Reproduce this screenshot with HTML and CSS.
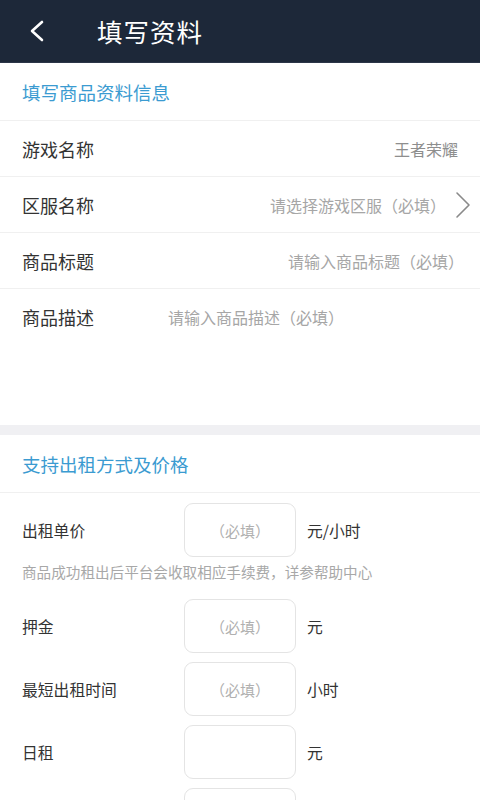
FILE: index.html
```html
<!DOCTYPE html>
<html lang="zh-CN">
<head>
<meta charset="utf-8">
<title>填写资料</title>
<link rel="stylesheet" href="styles.css">
</head>
<body>
<header class="topbar">
  <span class="back">
    <svg width="16" height="22" viewBox="0 0 16 22"><path d="M13 2 L3 11 L13 20" fill="none" stroke="#ffffff" stroke-width="2.6" stroke-linecap="round" stroke-linejoin="round"/></svg>
  </span>
  <h1 class="title">填写资料</h1>
</header>

<section class="card">
  <div class="sec-title">填写商品资料信息</div>
  <div class="row">
    <span class="label">游戏名称</span>
    <span class="value value-dark">王者荣耀</span>
  </div>
  <div class="row">
    <span class="label">区服名称</span>
    <span class="value">请选择游戏区服（必填）</span>
    <svg class="chev" width="18" height="28" viewBox="0 0 18 28"><path d="M3 2 L15 14 L3 26" fill="none" stroke="#8a8a8a" stroke-width="1.6" stroke-linecap="round" stroke-linejoin="round"/></svg>
  </div>
  <div class="row">
    <span class="label">商品标题</span>
    <span class="value value-pad">请输入商品标题（必填）</span>
  </div>
  <div class="row row-desc">
    <span class="label">商品描述</span>
    <span class="desc-ph">请输入商品描述（必填）</span>
  </div>
</section>

<div class="band"></div>

<section class="card">
  <div class="sec-title">支持出租方式及价格</div>
  <div class="prices">
    <div class="price-row">
      <span class="plabel">出租单价</span>
      <span class="box">（必填）</span>
      <span class="unit">元/小时</span>
    </div>
    <p class="note">商品成功租出后平台会收取相应手续费，详参帮助中心</p>
    <div class="price-row">
      <span class="plabel">押金</span>
      <span class="box">（必填）</span>
      <span class="unit">元</span>
    </div>
    <div class="price-row">
      <span class="plabel">最短出租时间</span>
      <span class="box">（必填）</span>
      <span class="unit">小时</span>
    </div>
    <div class="price-row">
      <span class="plabel">日租</span>
      <span class="box"></span>
      <span class="unit">元</span>
    </div>
    <div class="price-row">
      <span class="plabel"></span>
      <span class="box"></span>
    </div>
  </div>
</section>
</body>
</html>
```

FILE: styles.css
```css
* { box-sizing: border-box; }
html, body { margin: 0; padding: 0; background: #ffffff; }
body {
  font-family: "Noto Sans CJK SC", "Noto Sans", sans-serif;
  color: #333333;
}
.topbar {
  height: 63px;
  background: #1d2839;
  display: flex;
  align-items: center;
  border-bottom: 1px solid #2c3648;
}
.back {
  width: 16px;
  height: 22px;
  margin-left: 29px;
  display: flex;
}
.title {
  margin: 0 0 0 52px;
  font-size: 25.5px;
  font-weight: 400;
  color: #ffffff;
  letter-spacing: 1px;
  line-height: 1;
}
.card { background: #ffffff; }
.sec-title {
  height: 58px;
  display: flex;
  align-items: center;
  padding-left: 22px;
  font-size: 18.5px;
  color: #3b9bd1;
  border-bottom: 1px solid #f0f0f0;
}
.row {
  height: 56px;
  display: flex;
  align-items: center;
  padding: 0 22px;
  border-bottom: 1px solid #f0f0f0;
}
.label {
  font-size: 18px;
  color: #333333;
  flex: none;
}
.value {
  margin-left: auto;
  font-size: 16px;
  color: #a6a6a6;
}
.value-dark { color: #8e8e8e; }
.value-pad { margin-right: -6px; }
.chev {
  flex: none;
  margin-left: 8px;
  margin-right: -14px;
}
.row-desc {
  height: 136px;
  align-items: flex-start;
  padding-top: 14px;
  border-bottom: none;
}
.row-desc .label { line-height: 28px; }
.desc-ph {
  margin-left: 74px;
  font-size: 16px;
  color: #a6a6a6;
  line-height: 28px;
}
.band {
  height: 10px;
  background: #f0f0f3;
}
.sec-title.sec2 { }
.card .sec-title + .prices { padding-top: 10px; }
.prices { padding-bottom: 20px; }
.price-row {
  display: flex;
  align-items: center;
  height: 54px;
  padding-left: 22px;
  margin-bottom: 9px;
}
.plabel {
  width: 162px;
  flex: none;
  font-size: 15.8px;
  color: #333333;
}
.box {
  width: 112px;
  height: 54px;
  flex: none;
  border: 1px solid #e4e4e4;
  border-radius: 9px;
  display: flex;
  align-items: center;
  justify-content: center;
  font-size: 15px;
  color: #b0b0b0;
}
.unit {
  margin-left: 11px;
  font-size: 15.8px;
  color: #333333;
}
.note {
  margin: -4px 0 17px 22px;
  font-size: 14.6px;
  line-height: 20px;
  color: #a8a8a8;
}
```
